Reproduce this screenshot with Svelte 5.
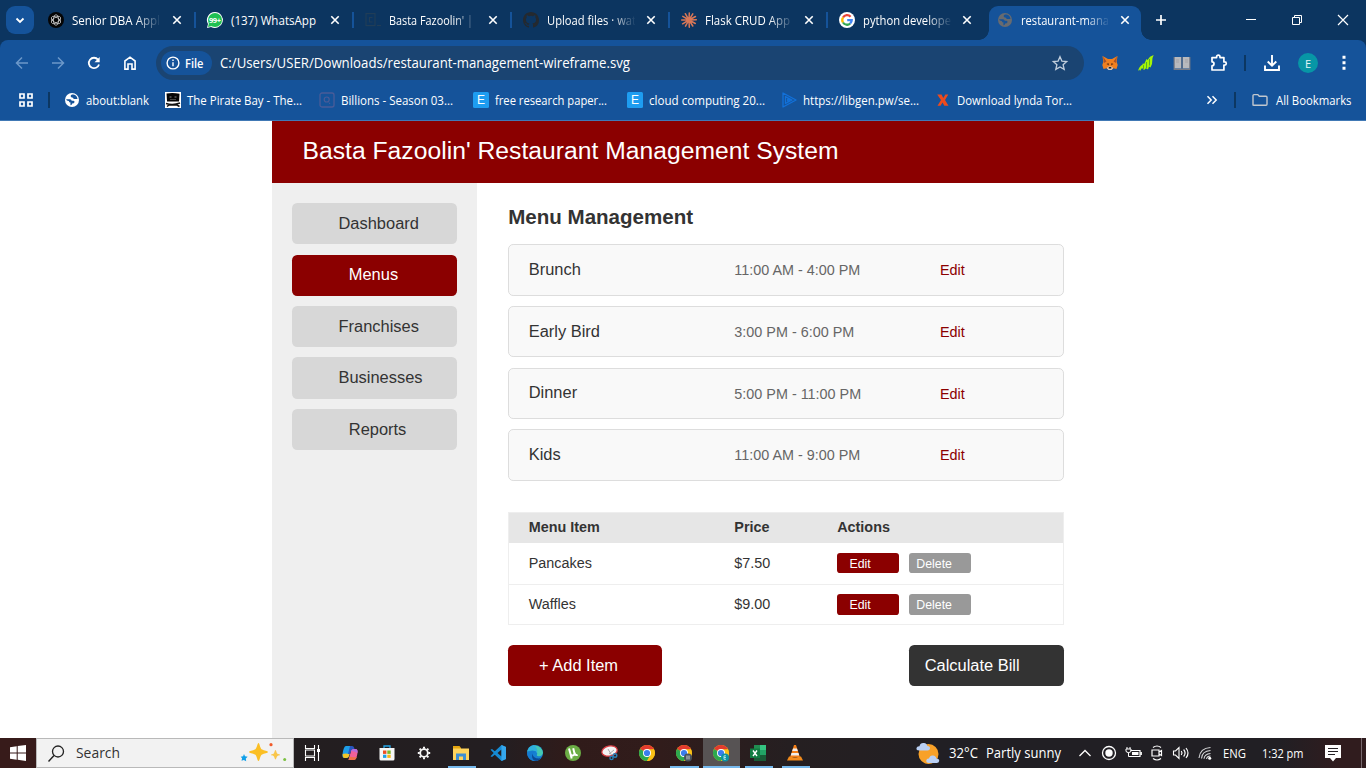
<script>
  // Each icon: [width, height, svg content], drawn at its display size.
  const globe = (disc, land) =>
    `<circle cx="8" cy="8" r="7" fill="${disc}"/><path d="M2.300 7.200H6Q7.500 7.200 7.700 8.800H9.500Q10.800 8.900 10.500 10.300 10.100 11.600 8.200 11.600 8 13.200 6.500 13.300 6.300 11.500 6.500 10.500 5 10.400 4.800 8.900 3.500 8.900 2.300 8ZM8 2.400Q6.400 3 6.700 4.600 7.200 5.800 8.800 5.600 9 7 10.200 7.100L13.500 7Q13 3.500 9.500 2.600Z" fill="${land}"/>`;
  const chromeMark =
    `<circle cx="8" cy="8" r="8" fill="#fbc116"/><path d="M8 8 1.070 4A8 8 0 0 1 14.930 4Z" fill="#e33b2e"/><path d="M1.070 4A8 8 0 0 0 8 16L11.500 10 8 8Z" fill="#2da94f"/><path d="M8 4.200h6.900A8 8 0 0 1 8 16l3.400-6z" fill="#fbc116"/><circle cx="8" cy="8" r="4" fill="#fff"/><circle cx="8" cy="8" r="3.100" fill="#3b7ded"/>`;
  const icons = {
    chevDown: [28, 28, `<path d="m10.500 12.500 3.500 3.500 3.500-3.500" fill="none" stroke="#fff" stroke-width="1.800"/>`],
    gpt: [16, 16, `<circle cx="8" cy="8" r="8" fill="#050505"/><g fill="none" stroke="#ccc" stroke-width=".8"><ellipse cx="8" cy="8" rx="2.600" ry="5.200"/><ellipse cx="8" cy="8" rx="2.600" ry="5.200" transform="rotate(60 8 8)"/><ellipse cx="8" cy="8" rx="2.600" ry="5.200" transform="rotate(120 8 8)"/></g>`],
    whatsapp: [16, 16, `<path d="M8 0a8 8 0 1 1-4 15L0 16l1-4A8 8 0 0 1 8 0Z" fill="#fff"/><circle cx="8" cy="8" r="7" fill="#1fc052"/><path d="M1 15l1-4 3 3Z" fill="#1fc052"/><text x="8" y="10.800" text-anchor="middle" font-family="Open Sans, sans-serif" font-size="7.500" font-weight="700" fill="#fff" textLength="12">99+</text>`],
    code: [16, 16, `<g fill="none" stroke="#213d57" stroke-width="1.200"><rect x="1" y="1.600" width="9" height="12"/><path d="M7.500 5.500H4.500v4.500h3M12 13.500h4"/></g>`],
    github: [16, 16, `<path fill="#24292f" d="M8 0C3.580 0 0 3.580 0 8c0 3.540 2.290 6.530 5.470 7.590.4.070.55-.17.55-.38 0-.19-.01-.82-.01-1.490-2.010.37-2.530-.49-2.690-.94-.09-.23-.48-.94-.82-1.130-.28-.15-.68-.52-.01-.53.63-.01 1.080.58 1.230.82.72 1.210 1.870.87 2.330.66.070-.52.28-.87.51-1.070-1.780-.2-3.640-.89-3.640-3.950 0-.87.31-1.590.82-2.150-.08-.2-.36-1.020.08-2.120 0 0 .67-.21 2.200.82a7.600 7.600 0 0 1 4 0c1.530-1.040 2.200-.82 2.200-.82.44 1.100.16 1.920.08 2.120.51.560.82 1.270.82 2.150 0 3.070-1.870 3.750-3.650 3.950.29.25.54.73.54 1.480 0 1.070-.01 1.930-.01 2.200 0 .21.15.46.55.38A8 8 0 0 0 16 8c0-4.420-3.580-8-8-8Z"/>`],
    claude: [16, 16, `<g stroke="#d97757" stroke-width="1.500" stroke-linecap="round"><path d="M8 8 8.300.9M8 8 11.800 1.800M8 8 14.500 4.500M8 8 15.300 7.800M8 8 14.300 11.500M8 8 11.800 14M8 8 8.300 15.200M8 8 4.500 14.200M8 8 1.600 11.800M8 8 .7 8M8 8 1.800 4.300M8 8 4.300 1.700"/></g>`],
    google: [16, 16, `<circle cx="8" cy="8" r="8" fill="#fff"/><g fill="none" stroke-width="2.300"><path d="M11.600 4.700A4.700 4.700 0 0 0 4 5.500" stroke="#ea4335"/><path d="M4 5.500a4.700 4.700 0 0 0 0 5" stroke="#fbbc05"/><path d="M4 10.500a4.700 4.700 0 0 0 7.200 1" stroke="#34a853"/><path d="M11.200 11.500A4.700 4.700 0 0 0 12.700 8.200H8.200" stroke="#4285f4"/></g>`],
    globeDark: [16, 16, globe('#686b70', '#15539a')],
    globe: [16, 16, globe('#fff', '#15539a')],
    close: [10, 10, `<path d="m1.300 1.300 7.400 7.400m0-7.400L1.300 8.700" stroke="#fff" stroke-width="1.600"/>`],
    plus: [12, 12, `<path d="M6 1v10M1 6h10" stroke="#fff" stroke-width="1.700"/>`],
    minimize: [12, 12, `<path d="M1 5.500h10" stroke="#fff"/>`],
    restore: [12, 12, `<path d="M1.500 3.500h7v7h-7ZM3.500 3.500v-2h7v7h-2" fill="none" stroke="#fff"/>`],
    winClose: [12, 12, `<path d="m1 1 10 10m0-10L1 11" stroke="#fff" stroke-width="1.200"/>`],
    back: [14, 14, `<path d="M13 7H2M7 1.500 1.500 7 7 12.500" fill="none" stroke="#6c98c9" stroke-width="1.500"/>`],
    forward: [14, 14, `<path d="M1 7h11M7 1.500 12.500 7 7 12.500" fill="none" stroke="#6c98c9" stroke-width="1.500"/>`],
    reload: [14, 14, `<path d="M12 8.500A5.200 5.200 0 1 1 11 3.600" fill="none" stroke="#fff" stroke-width="1.800"/><path d="M12.700 1v5.200H7.500Z" fill="#fff"/>`],
    home: [14, 16, `<path d="M1.900 14.100V6L7 2.200 12.100 6v8.100H9V9H5v5.100Z" fill="none" stroke="#fff" stroke-width="1.600"/>`],
    info: [14, 14, `<circle cx="7" cy="7" r="5.900" fill="none" stroke="#fff" stroke-width="1.400"/><path d="M7 6.300v4M7 3.600v1.500" stroke="#fff" stroke-width="1.400"/>`],
    star: [16, 16, `<path d="m8 1.700 1.900 4.400 4.800.4-3.600 3.200 1.100 4.700L8 11.900l-4.200 2.500 1.100-4.700L1.300 6.500l4.800-.4Z" fill="none" stroke="#c2cfdd" stroke-width="1.300"/>`],
    fox: [16, 16, `<path d="M.5 1 6 4h4l5.500-3-.8 6 1 3-1.200 4-3.200-.8L9.500 15h-3l-1.800-1.800-3.200.8-1.200-4 1-3Z" fill="#f0801f"/><path d="M1 1.500 4.500 6.500 2 8ZM15 1.500 11.500 6.500 14 8Z" fill="#a8512a"/><path d="M4.500 9 7 10.500 6.500 8ZM11.500 9 9 10.500 9.500 8Z" fill="#633015"/><path d="M4.800 13 6.600 11.400h2.800L11.200 13 9.500 15h-3Z" fill="#d8c8bc"/><path d="M6.700 12h2.600v1.600H6.700Z" fill="#222"/>`],
    ghost: [16, 16, `<path d="M0 16C.8 13 2 11 4.500 9.500L5 8l1 1.200L8.500 4 9.500 5 12 1.800 15.700 0 14.500 3 14 9 12.500 12.500l-1.500-1-1 3-2-1.300L6 15l-2-2-2 3-.5-1.500Z" fill="#a5f506"/><path d="m5.500 10.200 0 4M8.500 7v6M11.500 4v6.500" stroke="#429a34" stroke-width=".8"/>`],
    book: [18, 16, `<path d="M1 2h7v11.500H1ZM10 2h7v11.500h-7Z" fill="#b8b9bd"/><path d="M1.200 2v12.300h15.600V2M9 2v12" fill="none" stroke="#777b86" stroke-width="1.200"/><path d="M3 5h3M3 7h3M12 5h3M12 7h3" stroke="#9b9ca2" stroke-width=".7"/>`],
    puzzle: [18, 18, `<path d="M3 3.600h4.600V2.900a1.700 1.700 0 0 1 3.400 0v.7h3.900v4.300h.8a1.600 1.600 0 0 1 0 3.200h-.8V16H3v-4.200a2 2 0 0 0 0-4Z" fill="none" stroke="#fff" stroke-width="1.700" stroke-linejoin="round"/>`],
    download: [18, 18, `<path d="M9 1v10.500M4.700 7.500 9 11.700l4.300-4.200M2 11.500V16h14v-4.500" fill="none" stroke="#fff" stroke-width="1.900"/>`],
    dots: [4, 16, `<path d="M.5.800h3v3h-3ZM.5 6.300h3v3h-3ZM.5 11.800h3v3h-3Z" fill="#fff"/>`],
    apps: [16, 16, `<path d="M2 2h4v4H2ZM10 2h4v4h-4ZM2 10h4v4H2ZM10 10h4v4h-4Z" fill="none" stroke="#fff" stroke-width="1.700"/>`],
    pirate: [16, 16, `<path d="M0 0h16v16H0Z" fill="#fff"/><path d="M1.500 1.500q6.500-1 13 .3L14 9.500H2Z" fill="#050505"/><path d="M4.500 4.500h2v1h-2Zm5 0h2v1h-2ZM5 7h6v.6H5Z" fill="#888"/><path d="M1 11.500q7 2 14-.5M2 14.500l2-1.500h8l2.500 1.500" fill="none" stroke="#111" stroke-width="1.500"/>`],
    billions: [16, 16, `<rect x="1" y="1" width="14" height="14" rx="2" fill="none" stroke="#4a5c98" stroke-width="1.300"/><circle cx="7.700" cy="7.500" r="2.500" fill="none" stroke="#4a5c98" stroke-width="1.200"/><path d="m10 10.500 1 1.500" stroke="#4a5c98"/>`],
    letterE: [16, 16, `<rect width="16" height="16" rx="1.500" fill="#1e9df1"/><text x="8" y="12.300" text-anchor="middle" font-family="Liberation Sans, sans-serif" font-size="12" fill="#fff">E</text>`],
    play: [16, 16, `<path d="M2 1 15 8 2 15Z M4.500 4.500 11 8 4.500 11.500Z M6.700 7l2 1-2 1Z" fill="none" stroke="#1271da" stroke-width="1.300" stroke-linejoin="round"/>`],
    redX: [14, 14, `<path d="M1.200 1.500h4.300L7.300 5l2-3.500h3L9 7l3.500 5.700H8.300L6.500 9.500l-2 3.200h-3L5 7Z" fill="#ee4b1c"/>`],
    more: [12, 12, `<path d="m1.500 2.300 3.700 3.700-3.700 3.700M6.500 2.300 10.200 6 6.500 9.700" fill="none" stroke="#fff" stroke-width="1.500"/>`],
    folder: [16, 14, `<path d="M1 12V2.500Q1 1.600 2 1.600h3.800l1.500 1.700h6.700q1 0 1 .9v7q0 1-1 1H1.800Z" fill="none" stroke="#c1c7ce" stroke-width="1.400"/>`],
    windows: [16, 16, `<path d="M0 2.200 6.700 1.200v6.300H0ZM7.700 1.100 16 0v7.500H7.700ZM0 8.500h6.700v6.300L0 13.800ZM7.700 8.500H16V16l-8.300-1.200Z" fill="#fff"/>`],
    search: [17, 17, `<circle cx="10" cy="6.500" r="5.500" fill="none" stroke="#222" stroke-width="1.300"/><path d="m6 10.500-5.500 6" stroke="#222" stroke-width="1.400"/>`],
    sparkles: [48, 20, `<path d="M18.500 0c1.200 0 1.500 5.500 3.500 6.500s6 1.500 6 2.500-4 1.500-6 2.500-2.300 6.500-3.500 6.500-1.500-5.500-3.500-6.500-6-1.500-6-2.500 4-1.500 6-2.500 2.300-6.500 3.500-6.500Z" fill="#fbbf24"/><path d="M35.500 7c.8 0 1 3.200 2 3.700s2.500.4 2.500 1.100-1.500.6-2.500 1.200-1.200 3.400-2 3.400-1-2.800-2-3.400-2.500-.5-2.500-1.200 1.500-.6 2.500-1.100 1.200-3.700 2-3.700Z" fill="#f9c64a"/><path d="m4 11 1 2.300 2.700.5-1.900 1.700.4 2.700-2.400-1.200-2.300.8.600-2.500L.7 13.700l2.400-.4Z" fill="#109fe8"/><circle cx="31" cy="1.700" r="1.600" fill="#f15b2a"/><circle cx="44.700" cy="16.500" r="1.500" fill="#7cc142"/>`],
    taskview: [18, 16, `<path d="M1.500 0v3.500h9V0M1.500 16v-3.500h9V16M1.500 5v6h9V5ZM14.500 0v16" fill="none" stroke="#fff" stroke-width="1.100"/><path d="M13 4h3v3h-3Z" fill="#fff"/>`],
    copilot: [16, 16, `<path d="M4 1h6L7 11Q6.500 13 4.500 13H2.500Q0 13 .5 9.500Q1.500 1 4 1Z" fill="#1d9ee8"/><path d="M.7 9Q3 8 7.500 9L7 11Q6.500 13 4.500 13H2.500Q.5 13 .7 9Z" fill="#f3c526"/><path d="M12 15H6.500L9 6q.5-2 2.500-2h2q2.500 0 2 4Q14.500 15 12 15Z" fill="#f0609a"/><path d="M12 15H6.500L7.500 11.500q4 1.500 7.300.2Q14 15 12 15Z" fill="#ed7048"/><path d="M8 1h2q2 0 2.500 3h-1Q9.500 4 9 6L8 9H6Z" fill="#2856bf"/><path d="M11.500 4h2q2.500 0 2 4Q12 6 9 6q.5-2 2.500-2Z" fill="#b56bdc"/>`],
    store: [16, 16, `<path d="M5 3.500V1h6v2.500" fill="none" stroke="#26a7e8" stroke-width="1.300"/><path d="M.5 3h15v11q0 1.500-1.500 1.500H2Q.5 15.500.5 14Z" fill="#f7f7f7"/><path d="M4 5.500h3.400v3.400H4Z" fill="#ef4f25"/><path d="M8.300 5.500h3.400v3.400H8.300Z" fill="#7db829"/><path d="M4 9.700h3.400v3.200H4Z" fill="#21a1e8"/><path d="M8.300 9.700h3.400v3.200H8.300Z" fill="#fab719"/>`],
    gear: [14, 14, `<circle cx="7" cy="7" r="3.800" fill="none" stroke="#f6f6f6" stroke-width="1.800"/><g stroke="#f6f6f6" stroke-width="2"><path d="M7 .8v2M7 11.200v2M.8 7h2M11.200 7h2M2.600 2.600 4 4M10 10l1.400 1.400M11.400 2.600 10 4M4 10l-1.400 1.400"/></g>`],
    explorer: [16, 16, `<path d="M0 1h6.500L8 3v3H0Z" fill="#e5a50f"/><path d="M0 3.500h16V15H0Z" fill="#ffd45c"/><path d="M3 15V8.500h10V15h-3v-3.500H6V15Z" fill="#3f8fd2"/>`],
    vscode: [16, 16, `<path d="M11.500 0 16 2v12l-4.500 2L4.800 9.700 2 12 .5 11.200 3.700 8 .5 4.800 2 4l2.800 2.300Zm0 4.500L7.500 8l4 3.500Z" fill="#168bd3"/><path d="M11.500 0 16 2v12l-4.500 2Z" fill="#35a7ed"/>`],
    edge: [16, 16, `<circle cx="8" cy="8" r="8" fill="#1681d2"/><path d="M.3 6.500A8 8 0 0 1 16 7.500C16 10 14 11.300 11.800 11.200 9.500 11 9.500 10 10.200 9 10.500 6.500 8 5.300 5.500 5.200 3 5.100 1.300 6 .3 6.500Z" fill="#45c9b2"/><path d="M.3 6.500A8 8 0 0 1 7 .1Q11 3 10 8 9 5.500 5.500 5.200 3 5.100.3 6.500Z" fill="#2fb1dc"/><path d="M.2 9A7 6 0 0 1 9.700 7C5 6.500 3.500 12 9.500 15.800A8 8 0 0 1 .2 9Z" fill="#157bd0"/><path d="M5.500 8.700Q6 13.500 12 13.500l2.200-1Q11 17 7.500 15.500 4 13.500 5.500 8.700Z" fill="#0b4a95"/>`],
    utorrent: [16, 16, `<circle cx="8" cy="8" r="8" fill="#6bad45"/><path d="M4 3.500 5.500 9q.6 2 2.700 1.400 1.700-.6 1.200-2.500L8.200 3.200M9.600 8q.8 2.800 3 1.800M5.500 9l1.200 4.500" fill="none" stroke="#fff" stroke-width="2"/>`],
    snip: [17, 16, `<ellipse cx="8.500" cy="6" rx="7.800" ry="5" transform="rotate(-12 8.500 6)" fill="#f4f4f5" stroke="#d83d44" stroke-width="1.300"/><path d="m7 4 3.500 6M13 5 8 9" stroke="#aaa"/><g fill="none" stroke="#2780b8" stroke-width="1.400"><circle cx="10.500" cy="13" r="1.600"/><circle cx="14" cy="10.500" r="1.800"/></g>`],
    chrome: [16, 16, chromeMark],
    chromeGrey: [16, 16, chromeMark + `<circle cx="12" cy="12.500" r="4" fill="#47525d"/><path d="M10 10.500h4v4h-4Z" fill="#899197"/>`],
    chromeTeal: [16, 16, chromeMark + `<circle cx="12" cy="12.500" r="4" fill="#0b93a5"/><path d="M13 10.800h-2v3.500h2M11 12.500h2" fill="none" stroke="#c9edf0" stroke-width=".8"/>`],
    excel: [16, 16, `<path d="M4 0h12v16H4Z" fill="#218d51"/><path d="M10 0h6v5h-6Z" fill="#35c481"/><path d="M10 5h6v5h-6Z" fill="#22a365"/><path d="M4 10h12v6H4Z" fill="#185c37"/><path d="M0 3.500h10v9.500H0Z" fill="#107c41"/><path d="m3 5.500 4 5.500M7 5.500 3 11" stroke="#fff" stroke-width="1.400"/>`],
    vlc: [16, 16, `<path d="M7 0h2l4 12.500H3Z" fill="#f37d16"/><path d="m6 3.500h4l.8 2.500H5.200ZM4.500 8h7l.8 2.500H3.700Z" fill="#eee"/><path d="M2 11.500h2q4 2.500 8 0h2l2 4H0Z" fill="#f38b1c"/>`],
    weather: [25, 23, `<circle cx="12.500" cy="12" r="10" fill="#f8a128"/><path d="M3.300 8.500Q0 8.500.5 6q.5-2 3-1.800Q4.300.5 8 1q3 .4 3.300 3 3 0 2.700 2.500-.2 2-2.500 2ZM13 21q-3 0-2.700-2.500.3-2.300 2.700-2Q14 13 17 13.500q3 .4 3.300 3 3.200 0 2.900 2.500-.3 2-2.500 2Z" fill="#bad0f4"/>`],
    up: [14, 8, `<path d="m1.500 7 5.500-5.500L12.500 7" fill="none" stroke="#fff" stroke-width="1.300"/>`],
    record: [16, 16, `<circle cx="8" cy="8" r="6.500" fill="none" stroke="#fff" stroke-width="1.300"/><circle cx="8" cy="8" r="3.700" fill="#fff"/>`],
    battery: [17, 14, `<path d="M5.500 4.500H15v6H5.500M16.300 6v3" fill="none" stroke="#fff" stroke-width="1.200"/><path d="M7 6h6.500v3H7Z" fill="#fff"/><path d="M1 3h5v2q0 1.500-2.500 1.500T1 5ZM2 3V1M5 3V1M3.500 6.500v4H6" fill="none" stroke="#fff"/>`],
    camera: [14, 16, `<path d="M3 2.500Q7-.5 11 2.500M3 13.500q4 3 8 0M2 5h7v6H2ZM9 7l2.500-1.500v5L9 9" fill="none" stroke="#fff" stroke-width="1.200"/>`],
    volume: [18, 14, `<path d="M1.500 5h2L7 1.500v11L3.500 9h-2Z" fill="none" stroke="#fff" stroke-width="1.100"/><path d="M9.300 5q1.500 2 0 4M11.600 3.500q3 3.500 0 7M14 2q4 5 0 10" fill="none" stroke="#fff" stroke-width="1.200"/>`],
    wifi: [14, 14, `<g fill="none" stroke="#d7d7d9" stroke-width="1.100"><path d="M1 12Q2 2 12.500 1.500M3.500 12.500Q4 5 12.500 4.500M6 12.700Q6.500 8 12.500 7.500M8.500 13q.5-3 4-3"/></g><circle cx="11.700" cy="12.200" r="1.500" fill="#fff"/>`],
    notify: [16, 17, `<path d="M0 0h16v13h-5l-3 3.500L5 13H0Z" fill="#fff"/><path d="M3 3.500h10M3 6.500h10M3 9.500h7" stroke="#242024"/>`]
  };

  const tabs = [
    { icon: 'gpt', text: 'Senior DBA Appl', w: 88, fade: true },
    { icon: 'whatsapp', text: '(137) WhatsApp', w: 85 },
    { icon: 'code', text: "Basta Fazoolin' |", w: 84, fade: true },
    { icon: 'github', text: 'Upload files · wat', w: 89, fade: true },
    { icon: 'claude', text: 'Flask CRUD App', w: 85, fade: true },
    { icon: 'google', text: 'python develope', w: 88, fade: true },
    { icon: 'globeDark', text: 'restaurant-mana', w: 88, fade: true, active: true }
  ];
  const bookmarks = [
    { icon: 'globe', text: 'about:blank', w: 63, slot: 101 },
    { icon: 'pirate', text: 'The Pirate Bay - The...', w: 115, slot: 154 },
    { icon: 'billions', text: 'Billions - Season 03...', w: 112, slot: 154 },
    { icon: 'letterE', text: 'free research paper...', w: 112, slot: 154 },
    { icon: 'letterE', text: 'cloud computing 20...', w: 116, slot: 154 },
    { icon: 'play', text: 'https://libgen.pw/se...', w: 116, slot: 154 },
    { icon: 'redX', text: 'Download lynda Tor...', w: 115, slot: 154 }
  ];
  const extensions = ['fox', 'ghost', 'book', 'puzzle'];
  const apps = [
    { icon: 'taskview' }, { icon: 'copilot' }, { icon: 'store' }, { icon: 'gear' },
    { icon: 'explorer', open: true }, { icon: 'vscode' }, { icon: 'edge' }, { icon: 'utorrent' },
    { icon: 'snip' }, { icon: 'chrome' }, { icon: 'chromeGrey', open: true },
    { icon: 'chromeTeal', open: true, active: true }, { icon: 'excel', open: true }, { icon: 'vlc', open: true }
  ];
  const tray = ['up', 'record', 'battery', 'camera', 'volume', 'wifi'];

  const nav = [
    { text: 'Dashboard', indent: 45 },
    { text: 'Menus', indent: 55, active: true },
    { text: 'Franchises', indent: 45 },
    { text: 'Businesses', indent: 45 },
    { text: 'Reports', indent: 55 }
  ];
  const menus = [
    ['Brunch', '11:00 AM - 4:00 PM'],
    ['Early Bird', '3:00 PM - 6:00 PM'],
    ['Dinner', '5:00 PM - 11:00 PM'],
    ['Kids', '11:00 AM - 9:00 PM']
  ];
  const items = [['Pancakes', '$7.50'], ['Waffles', '$9.00']];
</script>

{#snippet icon(name)}
  <svg class="icon" width={icons[name][0]} height={icons[name][1]} viewBox="0 0 {icons[name][0]} {icons[name][1]}">{@html icons[name][2]}</svg>
{/snippet}

{#snippet label(text, w, size = 12, weight = 400)}
  <svg class="label" width={w} height="20"><text x="0" y="14.500" font-size={size} font-weight={weight} textLength={w} lengthAdjust="spacingAndGlyphs">{text}</text></svg>
{/snippet}

<div class="screen">
  <div class="frame">
    <div class="tabstrip">
      <div class="tabsearch">{@render icon('chevDown')}</div>
      {#each tabs as tab, i}
        <div class="tab" class:active={tab.active} class:plain={i < 5} class:first={i === 0}>
          {@render icon(tab.icon)}
          <div class="tabtext" class:fade={tab.fade}>{@render label(tab.text, tab.w)}</div>
          {@render icon('close')}
        </div>
      {/each}
      <div class="newtab">{@render icon('plus')}</div>
      <div class="controls">
        <span>{@render icon('minimize')}</span>
        <span>{@render icon('restore')}</span>
        <span>{@render icon('winClose')}</span>
      </div>
    </div>

    <div class="toolbar">
      <div class="slots">
        {#each ['back', 'forward', 'reload', 'home'] as name}<span>{@render icon(name)}</span>{/each}
      </div>
      <div class="omnibox">
        <div class="chip">{@render icon('info')}{@render label('File', 18.500, 12, 600)}</div>
        {@render label('C:/Users/USER/Downloads/restaurant-management-wireframe.svg', 410, 14)}
        <div class="staricon">{@render icon('star')}</div>
      </div>
      <div class="slots ext">
        {#each extensions as name}<span>{@render icon(name)}</span>{/each}
      </div>
      <div class="divider"></div>
      <div class="slots">
        <span>{@render icon('download')}</span>
        <span><b class="avatar">E</b></span>
        <span>{@render icon('dots')}</span>
      </div>
    </div>
  </div>

  <div class="bookmarks">
    <div class="appsicon">{@render icon('apps')}</div>
    <div class="divider"></div>
    <div class="marks">
      {#each bookmarks as mark}
        <div class="mark" style:width="{mark.slot}px"><div class="favicon">{@render icon(mark.icon)}</div>{@render label(mark.text, mark.w)}</div>
      {/each}
    </div>
    <div class="overflow">{@render icon('more')}</div>
    <div class="divider"></div>
    <div class="all">{@render icon('folder')}{@render label('All Bookmarks', 75.500)}</div>
  </div>

  <main>
    <div class="page">
      <header>Basta Fazoolin' Restaurant Management System</header>
      <div class="columns">
        <nav>
          {#each nav as entry}
            <div class="navitem" class:active={entry.active} style:padding-left="{entry.indent}px">{entry.text}</div>
          {/each}
        </nav>
        <section>
          <h1>Menu Management</h1>
          <div class="cards">
            {#each menus as [name, time]}
              <div class="card"><span>{name}</span><span class="time">{time}</span><span class="edit">Edit</span></div>
            {/each}
          </div>
          <div class="table">
            <div class="row head"><span>Menu Item</span><span>Price</span><span>Actions</span></div>
            {#each items as [name, price]}
              <div class="row">
                <span>{name}</span><span>{price}</span>
                <div class="actions"><div class="small">Edit</div><div class="small grey">Delete</div></div>
              </div>
            {/each}
          </div>
          <div class="bottom"><div class="big">+ Add Item</div><div class="big dark">Calculate Bill</div></div>
        </section>
      </div>
    </div>
  </main>

  <footer>
    <div class="start">{@render icon('windows')}</div>
    <div class="searchbox">{@render icon('search')}<div class="searchtext">{@render label('Search', 44, 15)}</div>{@render icon('sparkles')}</div>
    <div class="apps">
      {#each apps as app}
        <div class="app" class:open={app.open} class:active={app.active}>{@render icon(app.icon)}</div>
      {/each}
    </div>
    <div class="weather">{@render icon('weather')}{@render label('32°C', 29, 14)}{@render label('Partly sunny', 75, 14)}</div>
    <div class="tray">{#each tray as name}<span>{@render icon(name)}</span>{/each}</div>
    <div class="lang">{@render label('ENG', 23, 12)}</div>
    <div class="clock">{@render label('1:32 pm', 41.500, 12)}</div>
    <div class="notify">{@render icon('notify')}</div>
  </footer>
</div>

<style>
  :global(body) { margin: 0; overflow: hidden; background: #fff; }
  .screen {
    width: 1366px; height: 768px; display: flex; flex-direction: column; overflow: hidden;
    font-family: "Open Sans", "Noto Sans", sans-serif; color: #fff; background: #fff;
  }
  .icon, .label { display: block; flex: none; overflow: visible; }
  .label text { fill: currentColor; font-family: "Open Sans", "Noto Sans", sans-serif; }
  .divider { width: 2px; height: 16px; background: #0c3762; flex: none; }

  .frame { background: #0c3560; flex: none; }
  .tabstrip { height: 40px; display: flex; }
  .tabsearch { width: 28px; height: 28px; margin: 6px 7px 0 6px; border-radius: 9px; background: #15539a; }
  .tab {
    width: 158px; height: 28px; margin-top: 6px; padding-left: 8px; box-sizing: border-box;
    display: flex; align-items: center; position: relative;
  }
  .tab.first { padding-left: 7px; }
  .tab.plain::after { content: ""; position: absolute; right: 3px; top: 6px; width: 2px; height: 16px; background: #15539a; }
  .tab.active { height: 34px; width: 152px; padding-bottom: 6px; background: #15539a; border-radius: 9px 9px 0 0; }
  .tab.active::before, .tab.active::after {
    content: ""; position: absolute; bottom: 0; width: 10px; height: 10px;
  }
  .tab.active::before { left: -10px; background: radial-gradient(circle at 0 0, #0c3560 9.500px, #15539a 10px); }
  .tab.active::after { right: -10px; background: radial-gradient(circle at 100% 0, #0c3560 9.500px, #15539a 10px); }
  .tabtext { width: 88px; margin: 0 11px 0 8px; }
  .first .tabtext { margin-right: 12px; }
  .tabtext.fade { mask-image: linear-gradient(90deg, #000 64px, transparent 89px); }
  .newtab { margin: 14px 0 0 14px; }
  .controls { margin-left: auto; display: flex; }
  .controls span { width: 46px; display: grid; place-items: center; }

  .toolbar { height: 46px; display: flex; align-items: center; background: #15539a; border-radius: 8px 8px 0 0; }
  .slots { display: flex; }
  .slots span { width: 36px; height: 36px; display: grid; place-items: center; }
  .toolbar > .slots:first-child { padding-left: 4px; }
  .omnibox {
    width: 928px; height: 34px; margin-left: 8px; padding: 0 16px 0 5px; box-sizing: border-box;
    display: flex; align-items: center; border-radius: 17px; background: #1a4472;
  }
  .chip { width: 51px; height: 24px; padding-left: 5px; margin-right: 8px; box-sizing: border-box; display: flex; align-items: center; gap: 5px; border-radius: 12px; background: #15539a; }
  .staricon { margin-left: auto; }
  .ext { margin: 0 8px; }
  .ext + .divider { margin-right: 8px; }
  .avatar { width: 20px; height: 20px; border-radius: 50%; display: grid; place-items: center; background: #0796a6; color: #e4f5f7; font-size: 11px; font-weight: 400; }

  .bookmarks { height: 35px; padding-bottom: 6px; box-sizing: border-box; display: flex; align-items: center; background: #15539a; border-bottom: 1px solid #4179b5; flex: none; }
  .appsicon { margin: 0 14px 0 18px; }
  .marks { display: flex; margin-left: 14px; width: 1139px; }
  .mark { display: flex; align-items: center; gap: 6px; }
  .favicon { width: 16px; display: grid; place-items: center; }
  .overflow { margin: 0 16px 0 3px; }
  .all { display: flex; gap: 8px; align-items: center; margin-left: 16px; }

  main { height: 617px; flex: none; overflow: hidden; }
  .page { zoom: 1.02833; width: 800px; height: 600px; margin: 0 auto; font-family: "Liberation Sans", Arial, sans-serif; color: #333; }
  header { height: 60px; padding: 0 0 1px 30px; display: flex; align-items: center; background: #8b0000; color: #fff; font-size: 24px; letter-spacing: .02px; box-sizing: border-box; }
  .columns { display: flex; height: 540px; }
  nav { width: 200px; padding: 20px; box-sizing: border-box; background: #efefef; display: flex; flex-direction: column; gap: 10px; }
  .navitem { height: 40px; line-height: 39px; font-size: 16px; border-radius: 5px; background: #d7d7d7; box-sizing: border-box; }
  .navitem.active { background: #8b0000; color: #fff; line-height: 38.400px; }
  section { width: 540.500px; margin-left: 30px; }
  h1 { margin: 0; height: 60px; padding-top: 22px; box-sizing: border-box; font-size: 20px; line-height: 22.500px; }
  .cards { display: flex; flex-direction: column; gap: 10px; }
  .card { height: 50px; padding: 0 0 1px 19px; display: grid; grid-template-columns: 200px 200px 1fr; align-items: center; box-sizing: border-box; border: 1px solid #ddd; border-radius: 5px; background: #f9f9f9; font-size: 16px; }
  .card .time, .card .edit { font-size: 14px; color: #666; padding-top: 1.500px; }
  .card .edit { color: #8b0000; }
  .table { height: 110px; margin-top: 30px; border: 1px solid #eee; box-sizing: border-box; font-size: 14px; }
  .row { height: 40px; padding-left: 19px; display: grid; grid-template-columns: 200px 100px 1fr; align-items: center; box-sizing: border-box; }
  .row:last-child { border-top: 1px solid #eee; }
  .row:last-child span { padding-bottom: 1px; }
  .head { height: 29px; padding-bottom: 1.500px; background: #e6e6e6; font-weight: 700; }
  .actions { display: flex; gap: 10px; }
  .small { width: 60px; height: 20px; padding-left: 12px; line-height: 22px; box-sizing: border-box; border-radius: 3px; background: #8b0000; color: #fff; font-size: 12px; }
  .small.grey { background: #999; padding-left: 7px; }
  .bottom { display: flex; justify-content: space-between; margin-top: 20px; }
  .big { width: 150px; height: 40px; padding-left: 30px; line-height: 39px; box-sizing: border-box; border-radius: 5px; background: #8b0000; color: #fff; font-size: 16px; }
  .big.dark { width: 150.500px; background: #333; padding-left: 15px; }

  footer {
    height: 30px; display: flex; align-items: stretch; flex: none;
    background: linear-gradient(90deg, #371b1a 0, #371b1a 36px, #231e20 294px, #231e21 500px, #301b1a 570px, #311c1b 660px, #251f21 790px, #241f22 860px, #211f24 940px, #211f24 1280px, #301c1e 1340px);
  }
  .start { width: 36px; display: grid; place-items: center; }
  .searchbox { width: 258px; box-sizing: border-box; padding-left: 11px; border: 1px solid #b9b9b9; background: #f2f2f2; color: #333; display: flex; align-items: center; }
  .searchtext { width: 164px; margin-left: 11px; }
  .apps { display: flex; width: 622px; }
  .app { width: 37.150px; position: relative; display: grid; place-items: center; }
  .app.active { background: #575354; }
  .app.open::after { content: ""; position: absolute; left: 5px; right: 4px; bottom: 0; height: 2px; background: #76b9ed; }
  .app.active::after { left: 0; right: 0; }
  .weather { width: 157px; display: flex; align-items: center; gap: 8px; }
  .tray { display: flex; }
  .tray span { width: 24px; display: grid; place-items: center; }
  .lang, .clock { display: flex; align-items: center; }
  .lang { margin-left: 6px; width: 39px; }
  .clock { width: 63px; }
  .notify { width: 36px; border-right: 1px solid #77686d; display: flex; align-items: center; }
</style>
